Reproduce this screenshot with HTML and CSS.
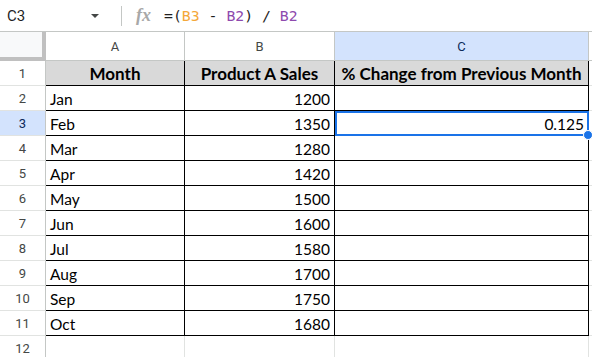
FILE: index.html
```html
<!DOCTYPE html>
<html lang="en">
<head>
    <meta charset="UTF-8">
    <title>Sheet</title>
    <link rel="stylesheet" href="styles.css">
</head>
<body>

<div class="topbar">
    <div class="namebox">
        <span class="ref">C3</span>
        <span class="caret"></span>
    </div>
    <div class="sep"></div>
    <div class="fx">fx</div>
    <div class="formula">=(<span class="r1">B3</span> - <span class="r2">B2</span>) / <span class="r2">B2</span></div>
</div>

<div class="sheet">
    <!-- column headers -->
    <div class="corner"></div>
    <div class="colhead">A</div>
    <div class="colhead">B</div>
    <div class="colhead active">C</div>
    <div class="colhead last"></div>

    <div class="rowhead">1</div>
    <div class="cell head">Month</div>
    <div class="cell head">Product A Sales</div>
    <div class="cell head">% Change from Previous Month</div>
    <div class="spare"></div>

    <div class="rowhead">2</div>
    <div class="cell">Jan</div>
    <div class="cell num">1200</div>
    <div class="cell num"></div>
    <div class="spare"></div>

    <div class="rowhead active">3</div>
    <div class="cell">Feb</div>
    <div class="cell num">1350</div>
    <div class="cell num selected">0.125<span class="handle"></span></div>
    <div class="spare"></div>

    <div class="rowhead">4</div>
    <div class="cell">Mar</div>
    <div class="cell num">1280</div>
    <div class="cell num"></div>
    <div class="spare"></div>

    <div class="rowhead">5</div>
    <div class="cell">Apr</div>
    <div class="cell num">1420</div>
    <div class="cell num"></div>
    <div class="spare"></div>

    <div class="rowhead">6</div>
    <div class="cell">May</div>
    <div class="cell num">1500</div>
    <div class="cell num"></div>
    <div class="spare"></div>

    <div class="rowhead">7</div>
    <div class="cell">Jun</div>
    <div class="cell num">1600</div>
    <div class="cell num"></div>
    <div class="spare"></div>

    <div class="rowhead">8</div>
    <div class="cell">Jul</div>
    <div class="cell num">1580</div>
    <div class="cell num"></div>
    <div class="spare"></div>

    <div class="rowhead">9</div>
    <div class="cell">Aug</div>
    <div class="cell num">1700</div>
    <div class="cell num"></div>
    <div class="spare"></div>

    <div class="rowhead">10</div>
    <div class="cell">Sep</div>
    <div class="cell num">1750</div>
    <div class="cell num"></div>
    <div class="spare"></div>

    <div class="rowhead">11</div>
    <div class="cell">Oct</div>
    <div class="cell num">1680</div>
    <div class="cell num"></div>
    <div class="spare"></div>

    <div class="rowhead">12</div>
    <div class="empty"></div>
    <div class="empty"></div>
    <div class="empty"></div>
    <div class="spare"></div>
</div>

</body>
</html>
```

FILE: styles.css
```css
body {
    margin: 0;
    background: #fff;
    font-family: Roboto, Arial, sans-serif;
    overflow: hidden;
}

.topbar {
    height: 31px;
    border-bottom: 1px solid #c4c7c5;
    display: flex;
    align-items: center;
}
.namebox {
    width: 114px;
    display: flex;
    align-items: center;
    justify-content: space-between;
    padding: 0 15px 0 7px;
    box-sizing: border-box;
}
.ref {
    font-size: 15px;
    color: #1f1f1f;
}
.caret {
    width: 0;
    height: 0;
    border-left: 4px solid transparent;
    border-right: 4px solid transparent;
    border-top: 4px solid #444746;
}
.sep {
    width: 1px;
    height: 20px;
    background: #c4c7c5;
    margin-left: 7px;
}
.fx {
    font-family: "Liberation Serif", serif;
    font-style: italic;
    font-weight: bold;
    font-size: 18px;
    color: #a8a8a8;
    margin-left: 14px;
    width: 28px;
}
.formula {
    font-family: "DejaVu Sans Mono", monospace;
    font-size: 14.8px;
    color: #1f1f1f;
}
.r1 { color: #f4a83a; }
.r2 { color: #8e4aae; }

.sheet {
    display: grid;
    grid-template-columns: 46px 139px 150px 254px 1fr;
    grid-auto-rows: 25px;
    grid-template-rows: 29px;
}
.sheet > div {
    box-sizing: border-box;
}

.corner {
    background: #f8f9fa;
    border-right: 4px solid #c0c0c0;
    border-bottom: 4px solid #c0c0c0;
}
.colhead {
    border-right: 1px solid #c4c7c5;
    border-bottom: 1px solid #c4c7c5;
    font-size: 13px;
    color: #444746;
    display: flex;
    align-items: center;
    justify-content: center;
}
.colhead.active {
    background: #d3e3fd;
    color: #0b2a5a;
}
.colhead.last {
    border-right: none;
}

.rowhead {
    border-right: 1px solid #c4c7c5;
    border-bottom: 1px solid #e1e3e1;
    font-size: 13px;
    color: #444746;
    display: flex;
    align-items: center;
    justify-content: center;
}
.rowhead.active {
    background: #d3e3fd;
    color: #0b2a5a;
}

.cell {
    border-right: 1px solid #000;
    border-bottom: 1px solid #000;
    font-family: Lato, "Liberation Sans", sans-serif;
    font-size: 15.5px;
    color: #000;
    display: flex;
    align-items: flex-end;
    padding: 0 4px 2px 4px;
    white-space: nowrap;
    position: relative;
}
.cell.num {
    justify-content: flex-end;
}
.cell.head {
    background: #d9d9d9;
    font-weight: bold;
    font-size: 17px;
    justify-content: center;
    padding-bottom: 1px;
}
.cell.selected {
    outline: 2px solid #1a73e8;
    outline-offset: -2px;
}
.handle {
    position: absolute;
    right: -5px;
    bottom: -5px;
    width: 8px;
    height: 8px;
    border-radius: 50%;
    background: #1a73e8;
    border: 1px solid #fff;
    z-index: 2;
}

.empty {
    border-right: 1px solid #e1e3e1;
    border-bottom: 1px solid #e1e3e1;
}
.spare {
    border-bottom: 1px solid #e1e3e1;
}
```
